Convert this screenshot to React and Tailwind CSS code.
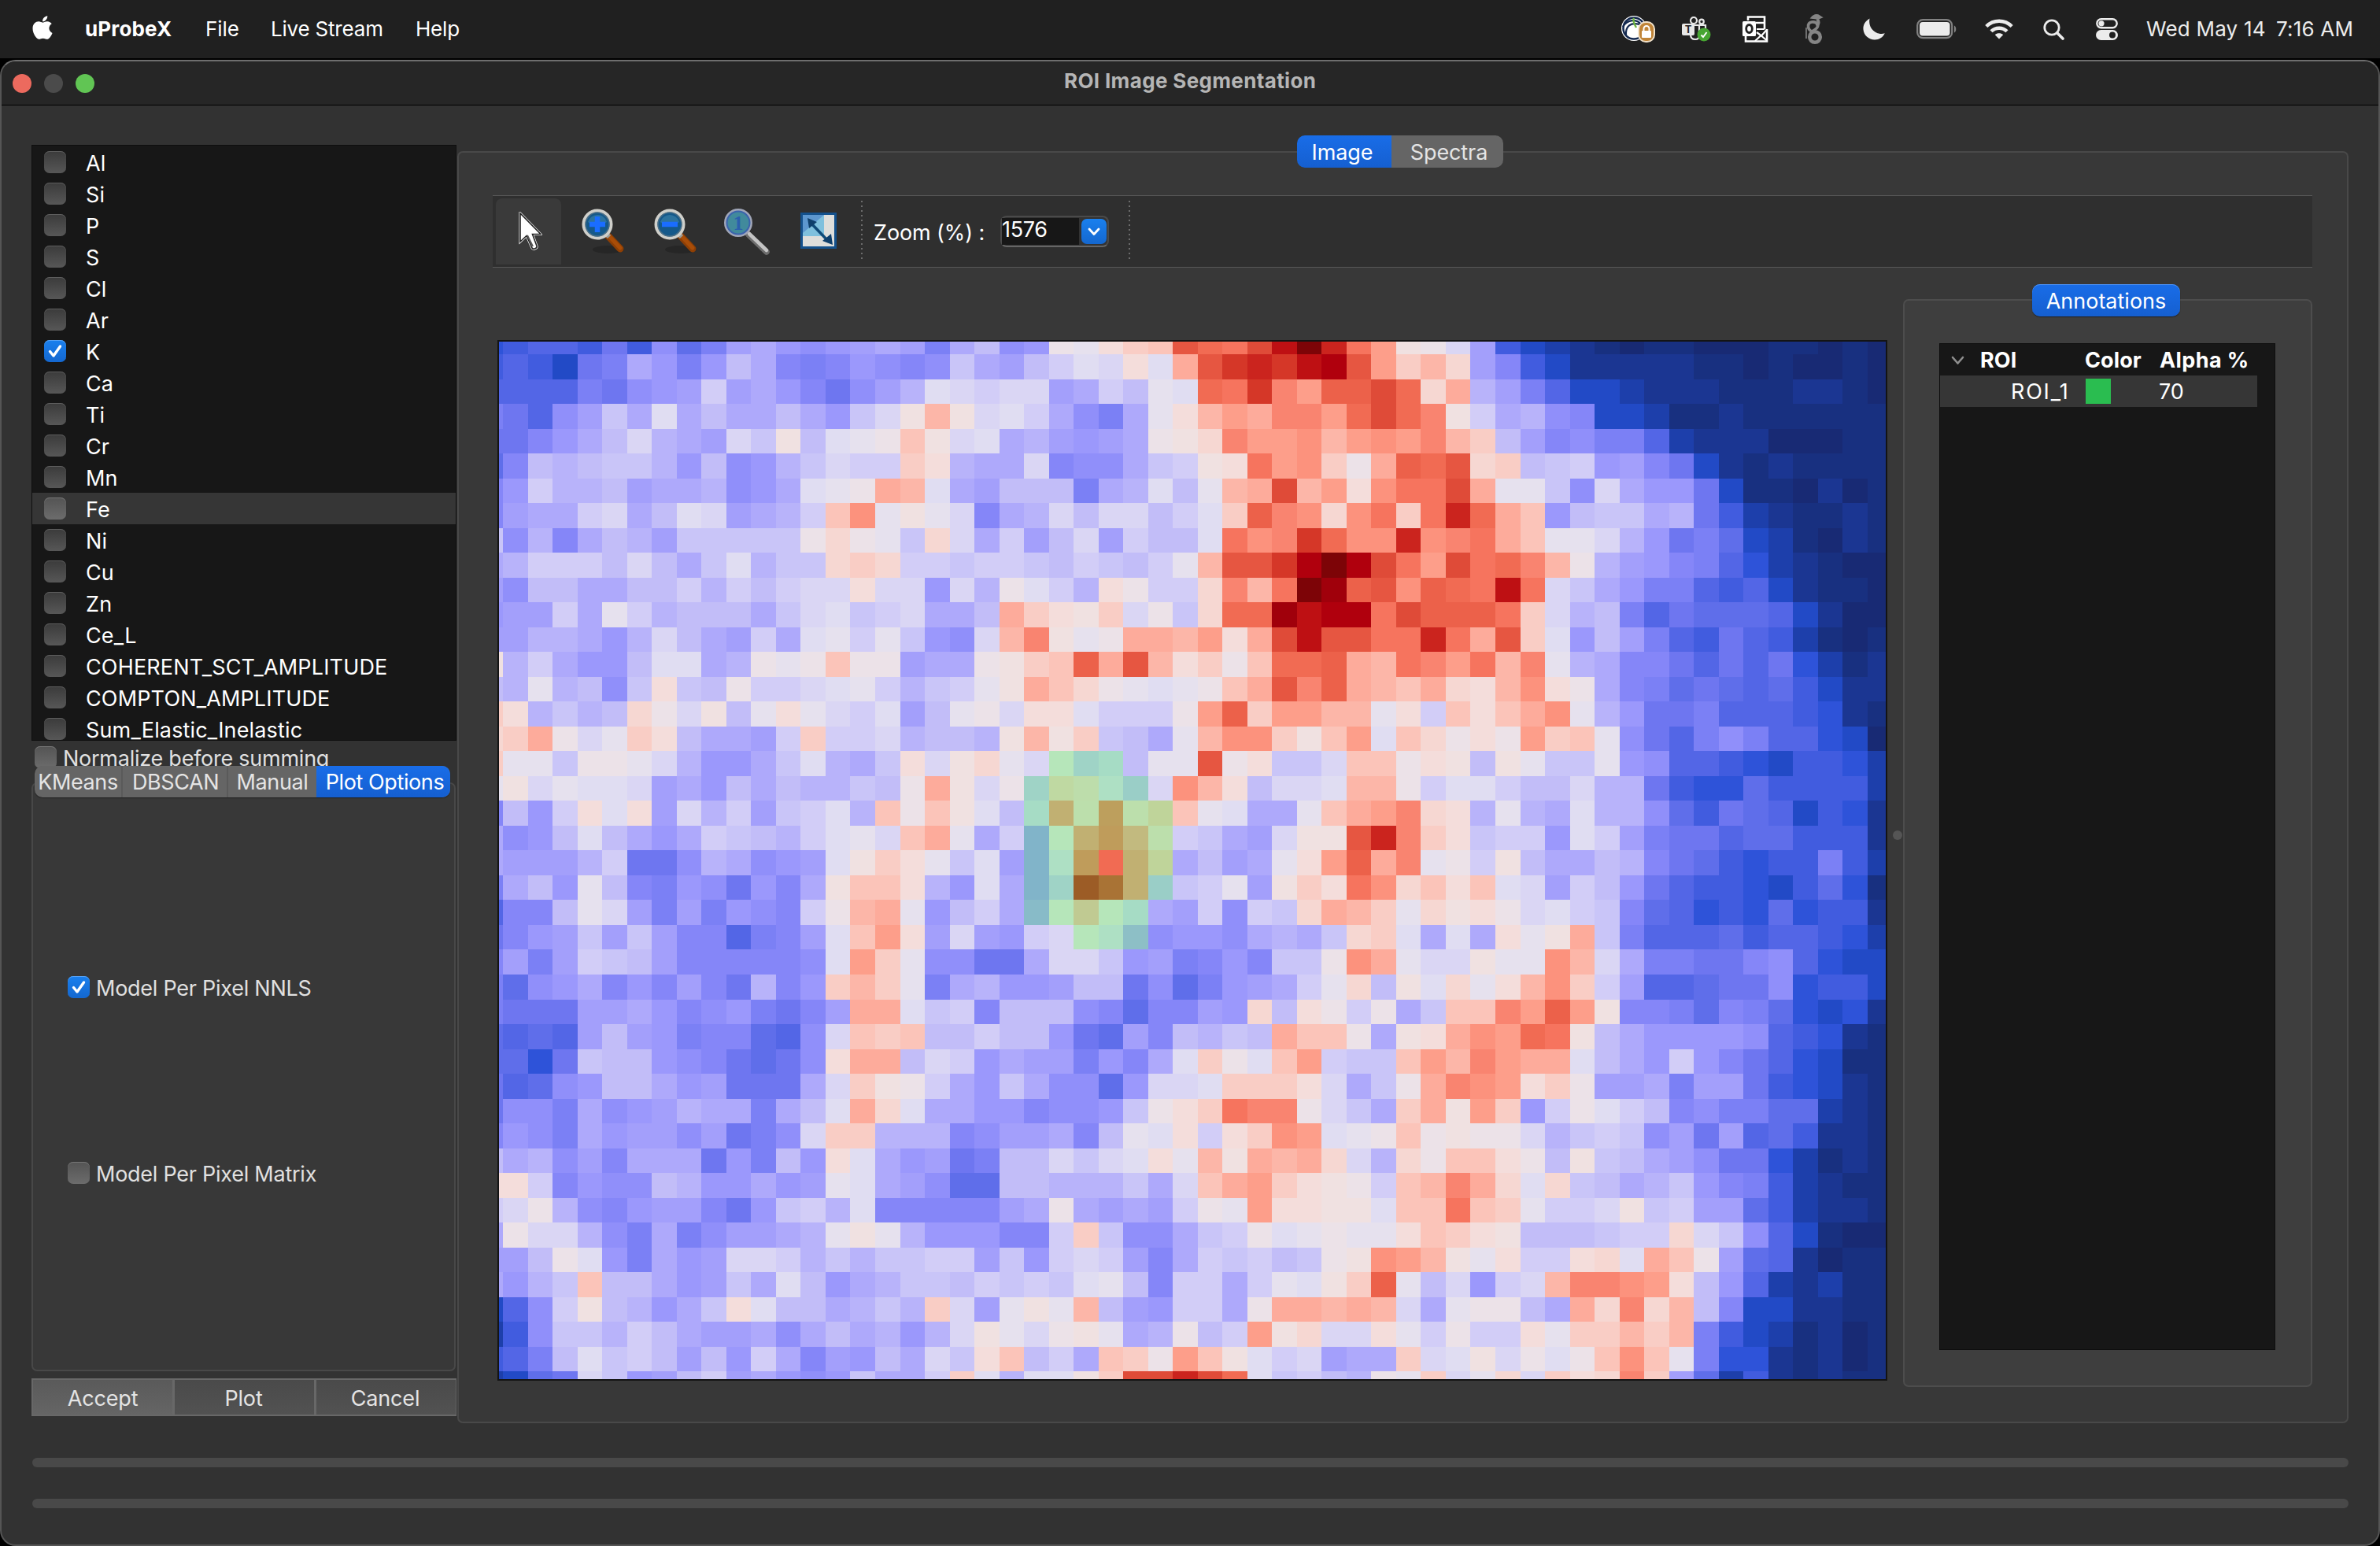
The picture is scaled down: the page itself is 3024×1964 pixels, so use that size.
import React from "react";
import { FaApple } from "react-icons/fa";

const PALETTE = {
  0: "#182a74", 1: "#183080", 2: "#1b3692", 3: "#1d3fab", 4: "#224ac6",
  5: "#2e53d9", 6: "#415cdf", 7: "#5366e6", 8: "#5f6eea", 9: "#6e76f0",
  A: "#7b80f5", B: "#8586f8", C: "#908ffa", D: "#9b98fc", E: "#a39ffb",
  F: "#aea9fb", G: "#b8b3fa", H: "#c2bdf8", I: "#c9c5f8", J: "#d2cdf7",
  K: "#dad6f4", L: "#e0ddf2", M: "#e6e1ee", N: "#ece2e8", O: "#f0e1e1",
  P: "#f4dddb", Q: "#f6d7d2", R: "#f9cdc5", S: "#fbc4b9", T: "#fcb6a8",
  U: "#fdab9b", V: "#fd9e8a", W: "#fc927d", X: "#f98470", Y: "#f6745e",
  Z: "#f16b53", a: "#ec614a", b: "#e65641", c: "#df4b38", d: "#d53728",
  e: "#cb241e", f: "#be1013", g: "#b0000d", h: "#a0000b", i: "#7d0407",
  j: "#b6e6ba", k: "#9fd3c6", l: "#a6dcc5", m: "#bfd9a2", n: "#bdddab",
  o: "#aee0c4", p: "#9acec7", q: "#c1b072", r: "#bcdfac", s: "#bd9f5d",
  t: "#bfd49a", u: "#81b4c9", v: "#c2ba7f", w: "#bf9c5b", y: "#9c5c26",
  z: "#a97335", "!": "#c0ca92", "@": "#88bbc8", "#": "#8dbfc6",
};

const MAP = [
  "5677696C8AEFDCDEFEA FHCDNMPRSbZYcfieYVO NKE6432101100011010",
  "67649AFDADHFBABDCBC IFEHJLKPLUbdedfgbVR TQEB642222211010010",
  "7777A9CDEJEFDB9CEGL KJKKEFJHMLZYdXVaacZ QUGEA74432221112210",
  "A97CEIFLFHFFHFDIKOT OKLJFCAFMPTVUXXVZcZ XOJFGCB443112111111",
  "99BDFHKGFEKIOHLMNSO KLFGEDEFNOQXVVWTVWV XTRHEBCAA7322200011",
  "8BHGHIIGDHCDGIKJJRP GFFKBCCFIJOPYVWRNUa ZbQRHIJDEB942121111",
  "BDJGGHEFFGCDFLMNUTL FEHHHAFGLHMTUcTVPWY YcUMMICKFDD94110201",
  "BEFFJKFHLKEFGJSWMOM KBFGKHKKHJLRaXWQWYR YeZUSDHIIFG96321121",
  "ICGBFHGEIIIIINQNMIQ KFJEHKEJHHLYWXdZWWe WXYUSMMKGD9A8431021",
  "FGJJJHKHFILGIIQRQJJ IJJIHJIHJMTbbdgigcY VcYZXTNGEDBA7532100",
  "ECHHFFHHJGJHJKKPKKD KGNLJGPNJJQXTYihabW aZYfYKIFDAA76742110",
  "DEEJFMJGHHHFIKLIJKF FHURPORKNIQZZhfggYc aaaYRKGHA7988874200",
  "EEGGFDGKHFEJFLMJMID CKTXOMNUUTVPUcfbbYY eYUbRLDHEA769763101",
  "OGJFDDHLLFGNMNSNNEF FNORSaUbTPRNSZZaUTY XVYTXMGFBB979795312",
  "HGMGHCIPIHNJJKLMJGI JMOUSQNMLMNSUbXaUTS UQPTWPNFBA898786422",
  "RPGIGHQNKOHMPMKJLEH MNKPPLJJJNVaRVVTTMP JSPSUWMGD99A7776521",
  "QRUNKMRPHFFEJRJJKGH HGOTORIHFMTWWROSVLS QNPNVRSMC97ACA77540",
  "RMMINNMKGDDFILGFIPK OQMKjklHMMbNPIIKSSN POHOMIIMDC776546653",
  "MOKMLLKEFDHFHGGIHNU OKNkmnopKWTPHKKLTTN JLLJHHKGG9655866663",
  "BHDJPLPEKGJEIJLGSNS OLHlqrsrtSMLFFMSUVX QPGMGFLGGC869874652",
  "FCDHLHFDFJIHGJLMKSU MFJujqwvrJIFEKOObeX RPIJJDLJEA997886662",
  "FEEEGJ99CGFCDELORPM ILEuowZqtFHEFMPVaUX MNJOHFFHGB986566A63",
  "AFHDMHBADC9DBFOSSPG DLFukyzqpIJMEORPYWQ SPSLKEJHD9766546851",
  "7BBHMKEAEADCBJNTUMD HJF@j!jlFEJCJIQUTRM QOPNKLJIB8756585662",
  "9BDEIEIEBB7ABELSVPE KEDJKjo#CDDCFGFIQRL FLFPMOUIA7778677653",
  "BEAEJIHEBBBBBCLVRMC C99FKKIDEABDBIINWUM KKOMMWTKFAA99BC7544",
  "A8CDFBDBEB9GBDRTRMA FGDDEHH9C8ADEFJMQHO LQMPTWRJE77899C5664",
  "A999EEFDBCDA9BEUULI JBHHHCB8BBEDQHPNJNF ISSXVaVOBBA8BA85452",
  "8787EHEDABB87CKSRSH HJHHD98EBHGIHUSSNFO PUWVZYOHFDDDDC76521",
  "8859IHHDCB989CPUUHK JDFEEADBFLRNLSVJIIS VTXVUULHFDJDB975411",
  "978CDHHFDE999FKRONJ FDIFCC8DKKLRRRPKFIN UXWVPRNEEFAEE965421",
  "9CCAFCDEGFFAFHLUQLF FDDBCCDINPRYXXNKIFR UOVRDJNLJHBCAA88321",
  "BDCAFDEECE9ACKRRGGG BCEEFBHMLPJPRWVLMNS NONNKGIJICE9E786221",
  "HFGCEBFFF9DAHDPLFDE 9AHHKIKLPMTOUTUQKGQ NSSPNHOIHFEC9953121",
  "PPJBDCCHGDDFDEMLFEC 88HHGGGIFKSUVRPONJS TXUQLQIHFGIDBA63211",
  "JKNGCBDEEB9DIJGLBBB BBEFNFEFEJNMVPPOOLS SYSRMJJKOIJEE863221",
  "FNKKGCAFACEEFGMOMGD DDBBJRICCFIJNLMNMMP SRPOHHHIJJQKIC74100",
  "EEHNLDAFDEKKJGIGIIJ JEIDJKJEBFJIJHINOWV TOMPJJPQLUSNE872011",
  "FDGISHHFDEIFLHDFGII HJIJILMHBJJFJMLORaM HKDJKTXXWVPHD732311",
  "47CJOHGDFIPLHHFGIGR KEMOMTHEDJJFNUUTUTK FMNNHFUQXQTHB442211",
  "36CIIGJHFEEFCFHFGDG KOMKNOMFGNHJVOQKKPM JNJJPMRRTRTA6431201",
  "67AHLIJHEHDJFBEDHFK IPSHJFSRNVSOLJKEFFR KLOKNLNSWSMA5521201",
  "3489KIDEHJEFDCDIFFJ RLGLLORccecZLIJHGNM RKMQKRPQXRE83621211",
];

const CELL = 31.52;

function Heatmap() {
  const W = 1762;
  const H = 1318;
  return (
    <svg width={W} height={H} viewBox={`0 0 ${W} ${H}`} shapeRendering="crispEdges" className="block">
      {MAP.map((line, r) => {
        const y0 = r === 0 ? 0 : Math.round(16 + (r - 1) * CELL);
        const y1 = Math.min(H, Math.round(16 + r * CELL));
        return line
          .replace(/ /g, "")
          .split("")
          .map((ch, c) => {
            const x0 = c === 0 ? 0 : Math.round(5.2 + (c - 1) * CELL);
            const x1 = Math.min(W, Math.round(5.2 + c * CELL));
            return <rect key={`${r}-${c}`} x={x0} y={y0} width={x1 - x0} height={y1 - y0} fill={PALETTE[ch]} />;
          });
      })}
    </svg>
  );
}

function CheckBox({ checked, light }) {
  if (checked) {
    return (
      <span className="flex h-[28px] w-[28px] shrink-0 items-center justify-center rounded-[7px] bg-linear-to-b from-[#1a80ee] to-[#1467cf] shadow-[inset_0_1px_0_#58a2f3]">
        <svg width="28" height="28" viewBox="0 0 28 28" fill="none">
          <path d="M7.5 14.5L12 20L20.5 8" stroke="#fff" strokeWidth="3.4" strokeLinecap="round" strokeLinejoin="round" />
        </svg>
      </span>
    );
  }
  return (
    <span
      className={
        light
          ? "h-[28px] w-[28px] shrink-0 rounded-[7px] bg-linear-to-b from-[#545454] to-[#6c6c6c] shadow-[inset_0_1px_0_#777]"
          : "h-[28px] w-[28px] shrink-0 rounded-[7px] bg-linear-to-b from-[#3b3b3b] to-[#575757] shadow-[inset_0_1px_0_#5e5e5e]"
      }
    />
  );
}

const ELEMENTS = [
  "Al", "Si", "P", "S", "Cl", "Ar", "K", "Ca", "Ti", "Cr", "Mn", "Fe", "Ni", "Cu", "Zn",
  "Ce_L", "COHERENT_SCT_AMPLITUDE", "COMPTON_AMPLITUDE", "Sum_Elastic_Inelastic",
];

function MenuBar() {
  return (
    <header className="flex h-[74px] items-center justify-between bg-[#202020] text-[26px] leading-none text-white">
      <nav className="flex items-center pl-[39px]">
        <FaApple className="-mt-[4px] h-[34px] w-[30px]" />
        <span className="ml-[39px] w-[153px] font-bold tracking-[0.15px]">uProbeX</span>
        <span className="w-[83px] tracking-[-0.1px]">File</span>
        <span className="w-[184px] tracking-[-0.2px]">Live Stream</span>
        <span className="tracking-[-0.2px]">Help</span>
      </nav>
      <div className="flex items-center pr-[33px]">
        <svg width="46" height="36" viewBox="0 0 46 36" className="mr-[31px]">
          <circle cx="17" cy="17" r="16" fill="#fff" />
          <circle cx="17" cy="17" r="13.5" fill="none" stroke="#14294f" strokeWidth="2.6" />
          <path d="M3 15C9 5 21 5 26 12M7 26C6 14 13 9 24 12" fill="none" stroke="#14294f" strokeWidth="2.2" />
          <path d="M17 4C15 8 18 12 20 16" fill="none" stroke="#6db33f" strokeWidth="2.4" />
          <rect x="23" y="9" width="20" height="25" rx="9" fill="#c08437" stroke="#f1e2cb" strokeWidth="2" />
          <rect x="27" y="20" width="12" height="9" rx="1" fill="#fff" />
          <path d="M29.500 20V17.500a3.500 3.500 0 0 1 7 0V20" fill="none" stroke="#fff" strokeWidth="2" />
        </svg>
        <svg width="38" height="32" viewBox="0 0 38 32" className="mr-[39px]">
          <g fill="none" stroke="#e8e8e8" strokeWidth="2.2">
            <circle cx="16" cy="5" r="4" />
            <circle cx="26" cy="6.500" r="2.800" />
            <path d="M12 23c0 4 2 6 6 6 3 0 5-1 5-5V11H10" />
            <path d="M23 11h8v6" />
          </g>
          <rect x="1" y="9" width="16" height="15" rx="2" fill="#e8e8e8" />
          <text x="9" y="21" textAnchor="middle" fontSize="13" fontWeight="700" fill="#202020">T</text>
          <circle cx="29" cy="23" r="8.500" fill="#47a532" />
          <path d="M25.500 23.500L28 26L32.500 20" fill="none" stroke="#fff" strokeWidth="2" />
        </svg>
        <svg width="34" height="34" viewBox="0 0 34 34" className="mr-[46px]" fill="none" stroke="#fff">
          <path d="M8 6V1.500H29V17M5 26V32.500H32V17" strokeWidth="2.600" />
          <path d="M18 9H29" strokeWidth="2.400" />
          <path d="M19 17H29" strokeWidth="2" />
          <path d="M19 21L25 25.500L32 17.500M17 32L24 25.500M32 31.500L25.500 26" strokeWidth="2.200" />
          <rect x="1" y="7" width="17" height="19" rx="1.500" fill="#fff" stroke="none" />
          <ellipse cx="9.500" cy="16.500" rx="3.800" ry="5" stroke="#202020" strokeWidth="2.800" />
        </svg>
        <svg width="24" height="42" viewBox="0 0 24 42" className="mr-[50px]" fill="none" stroke="#858585">
          <circle cx="13" cy="31" r="6.800" strokeWidth="4.500" />
          <path d="M9 24C3 21 3 13 9 12c6-1 10 4 6 8-2 2-5 4-8 5" strokeWidth="3.600" />
          <path d="M15 17c4-3 3-6 1-9" strokeWidth="4" />
          <path d="M8 7c3-4 6-5 9-4l5 3-5 2z" fill="#858585" strokeWidth="1.500" />
          <path d="M2 19v14" strokeWidth="1.600" />
        </svg>
        <svg width="28" height="28" viewBox="0 0 28 28" className="mr-[40px]">
          <path d="M8.500 0.500C2.500 4 0 9 0.500 14.500 1.200 22 7.500 27.500 15 27.500c5.500 0 10.500-3 12.800-8.200C18 22.500 6 14 8.500 0.500z" fill="#ececec" />
        </svg>
        <svg width="52" height="26" viewBox="0 0 52 26" className="mr-[35px]">
          <rect x="1.200" y="1.200" width="44" height="23" rx="7" fill="none" stroke="#828282" strokeWidth="2.200" />
          <rect x="4" y="4" width="38.500" height="17.500" rx="4" fill="#ececec" />
          <path d="M48 8.500c3 1 3 8 0 9z" fill="#828282" />
        </svg>
        <svg width="36" height="26" viewBox="0 0 36 26" className="mr-[38px]" fill="none" stroke="#ececec" strokeWidth="4.400">
          <path d="M1.800 9.500C10.800 0.500 25.200 0.500 34.200 9.500" />
          <path d="M8 15.800C13.500 10.300 22.500 10.300 28 15.800" />
          <path d="M18 25.500l-5.200-5.300c3-2.600 7.400-2.600 10.400 0z" fill="#ececec" stroke="none" />
        </svg>
        <svg width="27" height="27" viewBox="0 0 27 27" className="mr-[40px]" fill="none" stroke="#ececec">
          <circle cx="11" cy="11" r="9.200" strokeWidth="2.800" />
          <path d="M17.800 17.800L25 25" strokeWidth="3.600" strokeLinecap="round" />
        </svg>
        <svg width="28" height="28" viewBox="0 0 28 28" className="mr-[36px]">
          <rect x="1.300" y="1.300" width="25.400" height="11" rx="5.500" fill="none" stroke="#ececec" strokeWidth="2.400" />
          <circle cx="7" cy="6.800" r="3.600" fill="#ececec" />
          <rect x="0" y="15" width="28" height="13" rx="6.500" fill="#ececec" />
          <circle cx="21" cy="21.500" r="4" fill="#202020" />
        </svg>
        <span className="flex w-[264px] whitespace-pre text-[26px] tracking-[0.2px] text-[#ececec]">
          <span className="w-[165px]">Wed May 14</span>
          <span>7:16 AM</span>
        </span>
      </div>
    </header>
  );
}

function ElementList() {
  return (
    <div className="h-[757px] w-[540px] border border-[#0e0e0e] bg-[#171717] pt-[1px]">
      {ELEMENTS.map((name) => (
        <div key={name} className={name === "Fe" ? "flex h-[40px] items-center bg-[#363636] pl-[15px]" : "flex h-[40px] items-center pl-[15px]"}>
          <CheckBox checked={name === "K"} light={name === "Fe"} />
          <span className="ml-[25px] mt-[2px] text-[27px] leading-none tracking-[0.15px] text-white">{name}</span>
        </div>
      ))}
    </div>
  );
}

function LeftPanel() {
  return (
    <aside className="flex w-[540px] flex-col">
      <ElementList />
      <div className="flex h-[32px] items-start pl-[4px] pt-[7px]">
        <CheckBox light />
        <span className="ml-[8px] mt-[1px] text-[27px] leading-[30px] tracking-[-0.25px] text-[#e0e0e0]">Normalize before summing</span>
      </div>
      <div className="z-10 ml-[4px] flex h-[40px] w-[528px] overflow-hidden rounded-[10px] bg-[#656565] text-[27px] leading-[42px] tracking-[-0.4px] text-[#e4e4e4] shadow-[0_1px_1px_#222]">
        <span className="w-[112px] border-r-2 border-[#5a5a5a] text-center whitespace-nowrap">KMeans</span>
        <span className="w-[134px] border-r-2 border-[#5a5a5a] pl-[2px] text-center">DBSCAN</span>
        <span className="w-[112px] text-center">Manual</span>
        <span className="w-[170px] bg-linear-to-b from-[#196de8] to-[#155fd0] pl-[4px] text-center whitespace-nowrap text-white">Plot Options</span>
      </div>
      <div className="-mt-[19px] h-[748px] w-[539px] rounded-[7px] border-2 border-[#484848] bg-[#383838] pl-[44px]">
        <div className="mt-[242px] flex items-center">
          <CheckBox checked />
          <span className="ml-[8px] mt-[4px] text-[27px] leading-[28px] tracking-[-0.25px] text-[#e0e0e0]">Model Per Pixel NNLS</span>
        </div>
        <div className="mt-[204px] flex items-center">
          <CheckBox light />
          <span className="ml-[8px] mt-[4px] text-[27px] leading-[28px] tracking-[-0.25px] text-[#e0e0e0]">Model Per Pixel Matrix</span>
        </div>
      </div>
      <div className="mt-[9px] flex h-[48px] bg-[#686868] text-center text-[27px] leading-[47px] tracking-[-0.15px] text-[#e4e4e4]">
        <span className="my-[2px] ml-[2px] w-[177px] bg-linear-to-b from-[#5a5a5a] to-[#656565]">Accept</span>
        <span className="my-[2px] ml-[3px] w-[177px] bg-linear-to-b from-[#4a4a4a] to-[#525252] pr-[2px]">Plot</span>
        <span className="my-[2px] ml-[3px] w-[177px] bg-linear-to-b from-[#4a4a4a] to-[#525252] pr-[2px]">Cancel</span>
      </div>
    </aside>
  );
}

function Loupe({ sign }) {
  return (
    <svg width="62" height="64" viewBox="0 0 62 64">
      <ellipse cx="36" cy="55" rx="20" ry="5" fill="#262626" />
      <path d="M36 38L51 54" stroke="#8d3f05" strokeWidth="9" strokeLinecap="round" />
      <path d="M37 38L51 53" stroke="#a94d08" strokeWidth="5" strokeLinecap="round" />
      <path d="M32 34L37 39" stroke="#9a9a94" strokeWidth="6" />
      <circle cx="22" cy="23" r="17.500" fill="#15598a" stroke="#cfcfca" strokeWidth="4" />
      <circle cx="22" cy="23" r="15" fill="none" stroke="#4c6f86" strokeWidth="1.500" />
      <path d="M10 20a12.500 12.500 0 0 1 24 0c-7 5-17 5-24 0z" fill="#3d86ac" opacity="0.600" />
      <path d={sign === "+" ? "M12 23H32M22 13V33" : "M12 23H32"} stroke="#1a6dff" strokeWidth="6.500" />
    </svg>
  );
}

function Separator() {
  return <div className="h-[78px] w-[2px] bg-[repeating-linear-gradient(to_bottom,#6c6c6c_0px,#6c6c6c_2px,transparent_2px,transparent_6px)]" />;
}

function Toolbar() {
  return (
    <div className="ml-[42px] mt-[35px] flex h-[92px] w-[2312px] items-center border-y border-[#585858] bg-[#2f2f2f]">
      <div className="ml-[4px] flex h-[84px] w-[83px] items-center justify-center rounded-t-[8px] bg-[#3a3a3a]">
        <svg width="30" height="50" viewBox="0 0 30 50" className="ml-[5px]">
          <path d="M2 2V38L10 30.500L17 46C18.500 48.500 24 46.500 23 43.500L17.500 28.500H28z" fill="#fff" stroke="#fff" strokeWidth="3" />
          <path d="M2 2V38L10 30.500L17 46C18.500 48.500 24 46.500 23 43.500L17.500 28.500H28z" fill="#fff" stroke="#222" strokeWidth="1.600" />
          <path d="M11 30L18 44" stroke="#555" strokeWidth="2" />
        </svg>
      </div>
      <div className="ml-[24px] flex w-[260px] items-center">
        <Loupe sign="+" />
        <div className="ml-[30px]"><Loupe sign="-" /></div>
        <svg width="64" height="64" viewBox="0 0 64 64" className="ml-[27px] shrink-0">
          <path d="M33 36L56 58" stroke="#6d6d6d" strokeWidth="7.500" strokeLinecap="round" />
          <path d="M34 35L56 56" stroke="#c4c4c4" strokeWidth="4.500" strokeLinecap="round" />
          <circle cx="20" cy="21" r="16.500" fill="#418a9c" stroke="#a0a6b8" strokeWidth="3" />
          <circle cx="20" cy="21" r="14.500" fill="none" stroke="#3b63ad" strokeWidth="2" />
          <text x="20" y="30" textAnchor="middle" fontFamily="Liberation Serif" fontSize="26" fontWeight="700" fill="#2b5fae">1</text>
        </svg>
      </div>
      <svg width="48" height="48" viewBox="0 0 48 48" className="ml-[20px] mr-px shrink-0">
        <rect x="1.500" y="1.500" width="43" height="43" fill="#dededb" stroke="#14518c" strokeWidth="3" />
        <rect x="3" y="3" width="27" height="27" fill="#7fc0dd" />
        <path d="M3 3h27L3 26z" fill="#5d97cf" />
        <path d="M13 13L36 37" stroke="#0f4a78" strokeWidth="3.500" />
        <path d="M9 7L21 12L11 20zM41 41L28 36L39 27z" fill="#0e3f6c" />
      </svg>
      <div className="ml-[28px]"><Separator /></div>
      <span className="ml-[14px] mt-[3px] w-[161px] whitespace-nowrap text-[27px] leading-none tracking-[-0.1px] text-white">Zoom (%) :</span>
      <div className="flex h-[40px] w-[138px] items-center rounded-[8px] border-2 border-[#4a4a4a] border-b-[#666] bg-[#333]">
        <span className="h-[34px] w-[98px] bg-[#171717] text-[27px] leading-[30px] tracking-[-0.3px] text-white">1576</span>
        <span className="ml-[3px] flex h-[32px] w-[32px] items-center justify-center rounded-[7px] bg-linear-to-b from-[#1a80ee] to-[#1467cf]">
          <svg width="16" height="11" viewBox="0 0 16 11" fill="none">
            <path d="M2 2L8 8.500L14 2" stroke="#fff" strokeWidth="2.800" strokeLinecap="round" strokeLinejoin="round" />
          </svg>
        </span>
      </div>
      <div className="ml-[25px]"><Separator /></div>
    </div>
  );
}

function Annotations() {
  return (
    <section className="mt-[40px] flex h-[1382px] w-[520px] flex-col rounded-[7px] border-2 border-[#4d4d4d] bg-[#3e3e3e]">
      <span className="-mt-[21px] ml-[162px] h-[41px] w-[188px] rounded-[10px] bg-linear-to-b from-[#196de8] to-[#155fd0] text-center text-[27px] leading-[43px] tracking-[0px] text-white shadow-[inset_0_1px_0_#4d90f0,0_1px_1px_#222]">
        Annotations
      </span>
      <div className="ml-[44px] mt-[34px] h-[1279px] w-[427px] border border-[#0e0e0e] bg-[#171717] pt-[1px] text-[27px] leading-none text-white">
        <div className="flex h-[39px] items-center pl-[14px] font-bold tracking-[0.1px]">
          <svg width="17" height="12" viewBox="0 0 17 12" fill="none">
            <path d="M2 2L8.500 9.500L15 2" stroke="#8f8f8f" strokeWidth="2.600" strokeLinecap="round" strokeLinejoin="round" />
          </svg>
          <span className="ml-[20px] w-[133px]">ROI</span>
          <span className="w-[95px]">Color</span>
          <span className="whitespace-nowrap tracking-[0.4px]">Alpha %</span>
        </div>
        <div className="flex h-[40px] w-[403px] items-center bg-[#363636] pl-[90px]">
          <span className="w-[95px] tracking-[1.800px]">ROI_1</span>
          <span className="h-[32px] w-[32px] bg-[#2abd50]" />
          <span className="ml-[61px]">70</span>
        </div>
      </div>
    </section>
  );
}

export default function App() {
  return (
    <div className="h-[1964px] w-[3024px] overflow-hidden bg-black font-['Inter',sans-serif] antialiased">
      <MenuBar />
      <div className="mt-[2px] flex h-[1888px] flex-col overflow-hidden rounded-[20px] border-2 border-[#555] border-t-[#6e6e6e] bg-[#323232]">
        <div className="flex h-[55px] shrink-0 items-center bg-[#262626] pl-[14px]">
          <span className="h-[24px] w-[24px] rounded-full bg-[#ec6a5e]" />
          <span className="ml-[16px] h-[24px] w-[24px] rounded-full bg-[#4b4b4b]" />
          <span className="ml-[16px] h-[24px] w-[24px] rounded-full bg-[#61c554]" />
          <span className="-mt-[5px] ml-[1232px] text-[26px] font-bold leading-none tracking-[0.35px] text-[#b5b5b5]">ROI Image Segmentation</span>
        </div>
        <div className="h-px shrink-0 bg-black" />
        <div className="flex h-[1672px] shrink-0 gap-px pl-[38px] pt-[50px]">
          <LeftPanel />
          <main className="mt-[8px] flex h-[1616px] w-[2403px] flex-col rounded-[7px] border-2 border-[#494949] bg-[#383838]">
            <div className="-mt-[22px] ml-[1065px] flex h-[41px] w-[262px] shrink-0 overflow-hidden rounded-[10px] text-center text-[27px] leading-[44px] tracking-[-0.1px]">
              <span className="w-[120px] bg-linear-to-b from-[#196de8] to-[#155fd0] pr-[5px] text-white">Image</span>
              <span className="w-[142px] bg-[#656565] pl-[4px] text-[#e4e4e4]">Spectra</span>
            </div>
            <div className="ml-px flex flex-col">
              <Toolbar />
              <div className="flex">
                <div className="ml-[48px] mt-[92px] h-[1322px] w-[1766px] border-2 border-[#141414]">
                  <Heatmap />
                </div>
                <div className="mt-[715px] ml-[7px] mr-[1px] h-[12px] w-[12px] rounded-full bg-[#555]" />
                <Annotations />
              </div>
            </div>
          </main>
        </div>
        <div className="ml-[39px] mt-[46px] h-[12px] w-[2943px] shrink-0 rounded-[6px] bg-[#494949]" />
        <div className="ml-[39px] mt-[40px] h-[12px] w-[2943px] shrink-0 rounded-[6px] bg-[#494949]" />
      </div>
    </div>
  );
}
